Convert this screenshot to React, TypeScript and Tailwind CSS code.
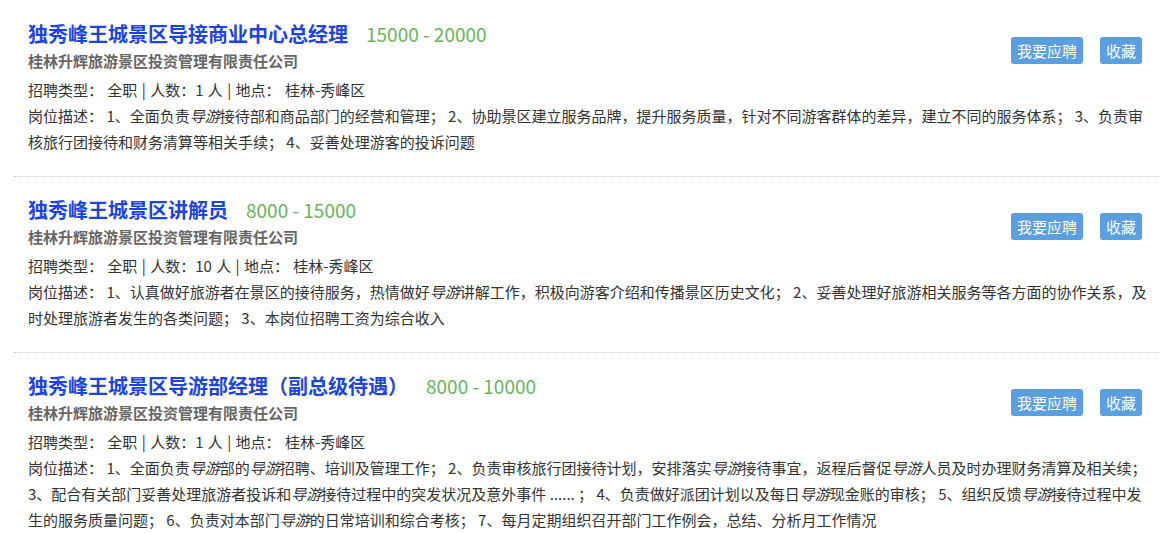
import React from "react";

type Part = string | { em: string };

type Job = {
  title: string;
  salary: string;
  count: string;
  desc: Part[];
};

const E = (s: string) => ({ em: s });

const jobs: Job[] = [
  {
    title: "独秀峰王城景区导接商业中心总经理",
    salary: "15000 - 20000",
    count: "1",
    desc: [
      "1、全面负责",
      E("导游"),
      "接待部和商品部门的经营和管理； 2、协助景区建立服务品牌，提升服务质量，针对不同游客群体的差异，建立不同的服务体系； 3、负责审核旅行团接待和财务清算等相关手续； 4、妥善处理游客的投诉问题",
    ],
  },
  {
    title: "独秀峰王城景区讲解员",
    salary: "8000 - 15000",
    count: "10",
    desc: [
      "1、认真做好旅游者在景区的接待服务，热情做好",
      E("导游"),
      "讲解工作，积极向游客介绍和传播景区历史文化； 2、妥善处理好旅游相关服务等各方面的协作关系，及时处理旅游者发生的各类问题； 3、本岗位招聘工资为综合收入",
    ],
  },
  {
    title: "独秀峰王城景区导游部经理（副总级待遇）",
    salary: "8000 - 10000",
    count: "1",
    desc: [
      "1、全面负责",
      E("导游"),
      "部的",
      E("导游"),
      "招聘、培训及管理工作； 2、负责审核旅行团接待计划，安排落实",
      E("导游"),
      "接待事宜，返程后督促",
      E("导游"),
      "人员及时办理财务清算及相关续； 3、配合有关部门妥善处理旅游者投诉和",
      E("导游"),
      "接待过程中的突发状况及意外事件 ...... ； 4、负责做好派团计划以及每日",
      E("导游"),
      "现金账的审核； 5、组织反馈",
      E("导游"),
      "接待过程中发生的服务质量问题； 6、负责对本部门",
      E("导游"),
      "的日常培训和综合考核； 7、每月定期组织召开部门工作例会，总结、分析月工作情况",
    ],
  },
];

function JobCard({ job }: { job: Job }) {
  return (
    <div className="border-b border-dotted border-[#cfcfcf] pt-[18px] pb-[21px] pl-[14px] pr-[4px]">
      <div className="flex items-start justify-between">
        <div>
          <div className="flex items-baseline h-[30px] leading-[30px]">
            <span className="text-[20px] font-bold text-[#1d44df]">{job.title}</span>
            <span className="ml-[18px] text-[19px] text-[#6ab35b]">{job.salary}</span>
          </div>
          <div className="mt-px text-[15px] font-bold text-[#666666] leading-[22px]">
            桂林升辉旅游景区投资管理有限责任公司
          </div>
          <div className="mt-[4px] text-[15px] text-[#333333] leading-[27px] [word-spacing:1px]">
            {"招聘类型： 全职 | 人数：" + job.count + " 人 | 地点： 桂林-秀峰区"}
          </div>
        </div>
        <div className="flex gap-[17px] mt-[18px] mr-[14px]">
          <button className="h-[27px] px-[6px] rounded-[3px] bg-[#5a9fe0] text-white text-[15px] leading-[27px]">
            我要应聘
          </button>
          <button className="h-[27px] px-[6px] rounded-[3px] bg-[#5a9fe0] text-white text-[15px] leading-[27px]">
            收藏
          </button>
        </div>
      </div>
      <div className="text-[15px] text-[#333333] leading-[26px]">
        {"岗位描述： "}
        {job.desc.map((p, i) =>
          typeof p === "string" ? (
            <span key={i}>{p}</span>
          ) : (
            <em key={i} className="italic">
              {p.em}
            </em>
          )
        )}
      </div>
    </div>
  );
}

export default function App() {
  return (
    <div
      className="w-[1174px] min-h-[533px] bg-white pt-px"
      style={{ fontFamily: '"Noto Sans CJK SC", "Noto Sans", sans-serif' }}
    >
      <div className="mx-[14px]">
        {jobs.map((j, i) => (
          <JobCard key={i} job={j} />
        ))}
      </div>
    </div>
  );
}
